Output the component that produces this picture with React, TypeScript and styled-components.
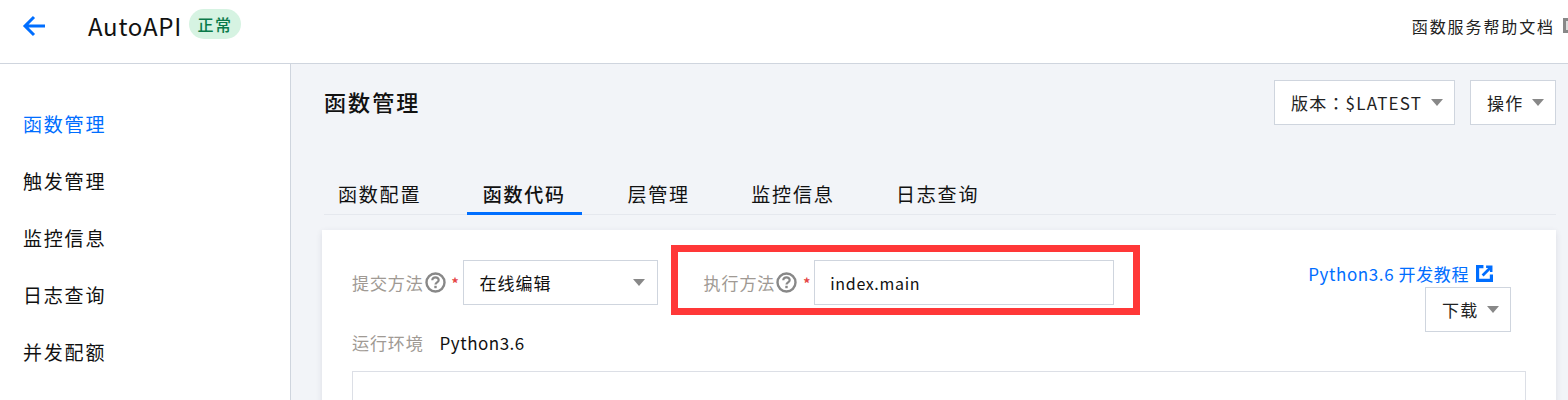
import React from 'react';
import styled, { createGlobalStyle } from 'styled-components';

const Colors = {
  Blue: '#006eff',
  Border: '#cfd5de',
  Page: '#f2f4f8',
  Text: '#111111',
  Label: '#a09a94',
  Caret: '#888888',
  Red: '#ff3838',
};

const GlobalStyle = createGlobalStyle`
  html, body {
    margin: 0;
    height: 400px;
    overflow: hidden;
    background: #fff;
    font-family: "Noto Sans CJK JP", "Noto Sans", sans-serif;
    color: ${Colors.Text};
  }
`;

const Page = styled.div`
  width: 1568px;
  height: 400px;
  display: flex;
  flex-direction: column;
  overflow: hidden;
`;

const Header = styled.header`
  height: 64px;
  box-sizing: border-box;
  flex: none;
  display: flex;
  align-items: center;
  border-bottom: 1px solid ${Colors.Border};
  padding: 0 0 12px 22px;
`;

const BackIcon = styled.svg`
  width: 24px;
  height: 22px;
  margin-right: 42px;
  color: ${Colors.Blue};
`;

const AppName = styled.h1`
  margin: 0 7px 0 0;
  font-size: 24px;
  font-weight: 400;
  letter-spacing: 0.7px;
`;

const StatusTag = styled.span`
  width: 52px;
  height: 30px;
  margin-bottom: 4px;
  border-radius: 15px;
  background: #d6f3e2;
  color: #0a7a4a;
  font-size: 16px;
  font-weight: 500;
  letter-spacing: 1.5px;
  display: flex;
  align-items: center;
  justify-content: center;
`;

const HelpLink = styled.a`
  margin-left: auto;
  margin-right: -10px;
  display: flex;
  align-items: center;
  gap: 8px;
  font-size: 16px;
  letter-spacing: 1.9px;
  color: #222;
`;

const HelpIcon = styled.span`
  width: 15px;
  height: 15px;
  border: 3px solid ${Colors.Caret};
  background: #ddd;
  box-sizing: border-box;
  flex: none;
`;

const Body = styled.div`
  flex: 1;
  display: flex;
  min-height: 0;
`;

const Sidebar = styled.nav`
  width: 291px;
  flex: none;
  box-sizing: border-box;
  border-right: 1px solid ${Colors.Border};
  padding: 42px 0 0 23px;
  display: flex;
  flex-direction: column;
  gap: 21px;
`;

const NavItem = styled.a<{ $active?: boolean }>`
  font-size: 19px;
  line-height: 36px;
  letter-spacing: 1.8px;
  color: ${props => (props.$active ? Colors.Blue : Colors.Text)};
`;

const Main = styled.main`
  flex: 1;
  background: ${Colors.Page};
  padding: 15px 12px 0 33px;
  min-width: 0;
`;

const TitleRow = styled.div`
  display: flex;
  align-items: center;
  justify-content: space-between;
  height: 46px;
`;

const Title = styled.h2`
  margin: -2px 0 0;
  font-size: 22px;
  font-weight: 500;
  letter-spacing: 2.1px;
`;

const Actions = styled.div`
  display: flex;
  gap: 15px;
`;

const DropButton = styled.button<{ $width: number }>`
  width: ${props => props.$width}px;
  height: 45px;
  box-sizing: border-box;
  border: 1px solid ${Colors.Border};
  background: #fff;
  padding: 0 11px 0 16px;
  display: flex;
  align-items: center;
  justify-content: space-between;
  font: inherit;
  font-size: 17px;
  letter-spacing: 1.2px;
  color: #222;
`;

const Caret = styled.i`
  flex: none;
  width: 0;
  height: 0;
  border-left: 6px solid transparent;
  border-right: 6px solid transparent;
  border-top: 7px solid ${Colors.Caret};
`;

const Tabs = styled.div`
  margin-top: 49px;
  height: 40px;
  display: flex;
  border-bottom: 1px solid #e5e8ee;
`;

const Tab = styled.a<{ $active?: boolean }>`
  box-sizing: border-box;
  height: 41px;
  padding: 0 16px;
  margin-right: 29.5px;
  line-height: 40px;
  font-size: 19px;
  letter-spacing: 1.8px;
  font-weight: ${props => (props.$active ? 500 : 400)};
  border-bottom: 3px solid ${props => (props.$active ? Colors.Blue : 'transparent')};
  &:first-child { margin-left: -2px; }
`;

const Card = styled.section`
  position: relative;
  margin: 15px 0 0 -2px;
  height: 200px;
  background: #fff;
  box-shadow: 0 2px 6px rgba(54, 58, 80, 0.12);
  padding: 30px 30px 0;
`;

const TopRow = styled.div`
  height: 45px;
  display: flex;
  align-items: center;
`;

const Label = styled.label`
  display: flex;
  align-items: center;
  font-size: 17px;
  letter-spacing: 0.9px;
  color: ${Colors.Label};
`;

const HelpMark = styled.svg`
  width: 21px;
  height: 21px;
  margin-left: 1px;
`;

const Required = styled.span`
  width: 7px;
  color: #e54545;
  font-size: 14px;
  font-weight: 700;
  margin: 0 4px 0 6px;
`;

const Select = styled.div`
  width: 195px;
  height: 45px;
  box-sizing: border-box;
  border: 1px solid ${Colors.Border};
  padding: 0 12px 0 16px;
  display: flex;
  align-items: center;
  justify-content: space-between;
  font-size: 17px;
  letter-spacing: 1px;
`;

const Input = styled.div`
  width: 300px;
  height: 45px;
  box-sizing: border-box;
  border: 1px solid ${Colors.Border};
  padding: 0 15px;
  display: flex;
  align-items: center;
  font-size: 16px;
  letter-spacing: 0.7px;
`;

const ExecField = styled.div`
  display: flex;
  align-items: center;
  margin-left: 46px;
`;

const RightCol = styled.div`
  margin-left: auto;
  align-self: flex-start;
  height: 45px;
  display: flex;
  flex-direction: column;
  align-items: flex-end;
`;

const DocLink = styled.a`
  height: 27px;
  flex: none;
  display: flex;
  align-items: center;
  gap: 7px;
  margin-right: 33px;
  font-size: 17px;
  letter-spacing: 0.6px;
  color: ${Colors.Blue};
`;

const LinkIcon = styled.svg`
  width: 17px;
  height: 17px;
`;

const Download = styled(DropButton)`
  margin-right: 15px;
  flex: none;
`;

const EnvRow = styled.div`
  display: flex;
  align-items: center;
  gap: 16px;
  margin-top: 25px;
  height: 24px;
  font-size: 17px;
  letter-spacing: 0.5px;
`;

const EnvLabel = styled.span`
  color: ${Colors.Label};
  letter-spacing: 0.9px;
`;

const Editor = styled.div`
  margin-top: 17px;
  height: 120px;
  border: 1px solid #dcdfe6;
`;

// red annotation drawn over the screenshot
const Highlight = styled.div`
  position: absolute;
  left: 349px;
  top: 15px;
  width: 469px;
  height: 70px;
  box-sizing: border-box;
  border: 7px solid ${Colors.Red};
  pointer-events: none;
`;

const QuestionIcon = () => (
  <HelpMark viewBox="0 0 21 21" fill="none">
    <circle cx="10.5" cy="10.5" r="9" stroke="#888" strokeWidth="2.4" />
    <path d="M7.3 8.300c0-1.900 1.400-3 3.200-3s3.200 1.100 3.200 2.700c0 2.400-3.200 2.200-3.200 4.500" stroke="#888" strokeWidth="2.2" />
    <rect x="9.300" y="13.800" width="2.400" height="2.400" fill="#888" />
  </HelpMark>
);

const navItems = ['函数管理', '触发管理', '监控信息', '日志查询', '并发配额'];
const tabs = ['函数配置', '函数代码', '层管理', '监控信息', '日志查询'];

export default function App() {
  return (
    <Page>
      <GlobalStyle />
      <Header>
        <BackIcon viewBox="0 0 24 22" fill="none">
          <path d="M23 11H3M12 2l-9 9 9 9" stroke="currentColor" strokeWidth="3" />
        </BackIcon>
        <AppName>AutoAPI</AppName>
        <StatusTag>正常</StatusTag>
        <HelpLink>
          函数服务帮助文档
          <HelpIcon />
        </HelpLink>
      </Header>
      <Body>
        <Sidebar>
          {navItems.map((item, i) => (
            <NavItem key={item} $active={i === 0}>{item}</NavItem>
          ))}
        </Sidebar>
        <Main>
          <TitleRow>
            <Title>函数管理</Title>
            <Actions>
              <DropButton $width={181}>版本：$LATEST<Caret /></DropButton>
              <DropButton $width={86}>操作<Caret /></DropButton>
            </Actions>
          </TitleRow>
          <Tabs>
            {tabs.map((tab, i) => (
              <Tab key={tab} $active={i === 1}>{tab}</Tab>
            ))}
          </Tabs>
          <Card>
            <TopRow>
              <Label>提交方法<QuestionIcon /><Required>*</Required></Label>
              <Select>在线编辑<Caret /></Select>
              <ExecField>
                <Label>执行方法<QuestionIcon /><Required>*</Required></Label>
                <Input>index.main</Input>
              </ExecField>
              <RightCol>
                <DocLink>
                  Python3.6 开发教程
                  <LinkIcon viewBox="0 0 16 16" fill="none" stroke={Colors.Blue}>
                    <path d="M7 1.500H1.500v13h13V9" strokeWidth="3" />
                    <path d="M9.500 1.700h4.800v4.800" strokeWidth="2.400" />
                    <path d="M13.500 2.500 6.200 9.800" strokeWidth="2.600" />
                  </LinkIcon>
                </DocLink>
                <Download $width={86}>下载<Caret /></Download>
              </RightCol>
            </TopRow>
            <EnvRow>
              <EnvLabel>运行环境</EnvLabel>
              <span>Python3.6</span>
            </EnvRow>
            <Editor />
            <Highlight />
          </Card>
        </Main>
      </Body>
    </Page>
  );
}
